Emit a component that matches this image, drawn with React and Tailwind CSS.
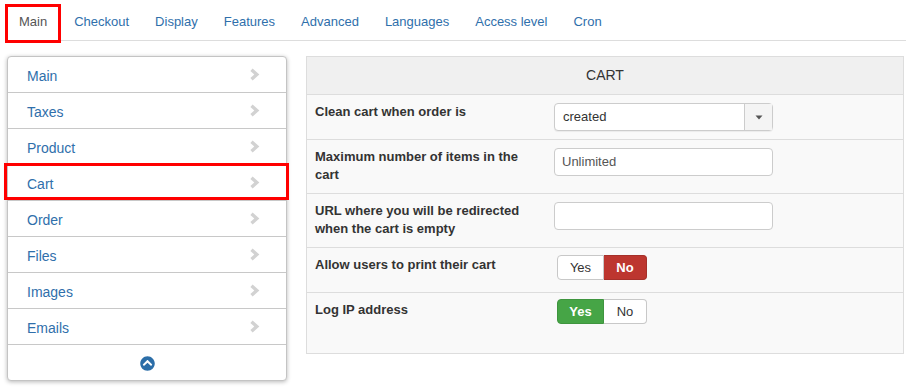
import React from "react";
import { FaChevronCircleUp } from "react-icons/fa";

const tabs = ["Checkout", "Display", "Features", "Advanced", "Languages", "Access level", "Cron"];
const items = ["Main", "Taxes", "Product", "Cart", "Order", "Files", "Images", "Emails"];

function Chevron() {
  return (
    <svg width="11" height="13" viewBox="0 0 11 13" className="mb-[4px]">
      <path d="M2.5 1.8 L7.8 6.5 L2.5 11.2" fill="none" stroke="#d2d2d2" strokeWidth="3.4" strokeLinejoin="miter" />
    </svg>
  );
}

function Toggle({ yes }) {
  return (
    <div className="ml-[3px] flex h-[25px] w-[90px] text-[13px] leading-[23px]">
      <div
        className={
          yes
            ? "w-[47px] rounded-l-[4px] border border-[#3f953f] bg-[#46a546] text-center font-bold text-white"
            : "w-[47px] rounded-l-[4px] border border-[#c8c8c8] bg-white text-center text-[#333]"
        }
      >
        Yes
      </div>
      <div
        className={
          yes
            ? "w-[43px] rounded-r-[4px] border border-l-0 border-[#c8c8c8] bg-white text-center text-[#333]"
            : "w-[43px] rounded-r-[4px] border border-l-0 border-[#a5302a] bg-[#bd362f] text-center font-bold text-white"
        }
      >
        No
      </div>
    </div>
  );
}

function Row({ label, children, h, pt, last }) {
  return (
    <div
      className={
        "grid grid-cols-[239px_1fr] bg-[#f9f9f9] " + (last ? "" : "border-b border-[#ddd]")
      }
      style={{ height: h }}
    >
      <div className="px-[8px] pt-[8px] text-[13px] font-bold leading-[18px] text-[#333]">{label}</div>
      <div className="px-[8px]" style={{ paddingTop: pt }}>
        {children}
      </div>
    </div>
  );
}

export default function App() {
  return (
    <div className="h-[390px] w-[914px] overflow-hidden bg-white pt-[4px] font-['Liberation_Sans',Arial,sans-serif] text-[13px]">
      {/* Tabs */}
      <div className="ml-[5px] flex h-[37px] w-[901px] border-b border-[#ddd]">
        <div className="relative z-10 flex h-[39px] items-center border-[3px] border-[#ff0000] bg-white px-[11px] pb-[3px] text-[13px] text-[#555]">
          Main
        </div>
        {tabs.map((t) => (
          <div key={t} className="flex h-[36px] items-center px-[13px] text-[13px] text-[#2f6fab]">
            {t}
          </div>
        ))}
      </div>

      <div className="mt-[15px] flex items-start">
        {/* Sidebar */}
        <div className="ml-[7px] w-[280px] rounded-[4px] border border-[#c4c4c4] bg-white shadow-[0_1px_4px_rgba(0,0,0,0.28)]">
          {items.map((it) => (
            <div
              key={it}
              className="relative flex h-[36px] items-center justify-between border-b border-[#c8c8c8] pl-[19px] pr-[26px] pt-[3px]"
            >
              <span className="text-[14px] text-[#2f6fab]">{it}</span>
              <Chevron />
              {it === "Cart" && (
                <div className="pointer-events-none absolute -left-[4px] -right-[3px] -top-[2px] bottom-0 border-[3px] border-[#ff0000]" />
              )}
            </div>
          ))}
          <div className="flex h-[35px] items-center justify-center pt-[2px]">
            <FaChevronCircleUp className="text-[15px] text-[#2c6ea8]" />
          </div>
        </div>

        {/* Panel */}
        <div className="ml-[19px] w-[598px] border border-[#ddd]">
          <div className="flex h-[38px] items-center justify-center border-b border-[#ddd] bg-[#f0f0f0] text-[14px] text-[#333]">
            CART
          </div>
          <Row label="Clean cart when order is" h={45} pt={8}>
            <div className="flex h-[28px] w-[219px] rounded-[4px] border border-[#ccc] bg-white shadow-[0_1px_1px_rgba(0,0,0,0.06)]">
              <div className="flex-1 pl-[8px] text-[13px] leading-[26px] text-[#333]">created</div>
              <div className="flex w-[28px] items-center justify-center border-l border-[#ccc] bg-[#f4f4f4]">
                <svg width="8" height="5" viewBox="0 0 8 5">
                  <path d="M0.5 0.5 L7.5 0.5 L4 4.5 Z" fill="#555" />
                </svg>
              </div>
            </div>
          </Row>
          <Row label="Maximum number of items in the cart" h={54} pt={8}>
            <div className="h-[28px] w-[219px] rounded-[4px] border border-[#ccc] bg-white pl-[7px] text-[13px] leading-[25px] text-[#555]">
              Unlimited
            </div>
          </Row>
          <Row label="URL where you will be redirected when the cart is empty" h={54} pt={8}>
            <div className="h-[28px] w-[219px] rounded-[4px] border border-[#ccc] bg-white" />
          </Row>
          <Row label="Allow users to print their cart" h={45} pt={7}>
            <Toggle yes={false} />
          </Row>
          <Row label="Log IP address" h={60} pt={6} last>
            <Toggle yes={true} />
          </Row>
        </div>
      </div>
    </div>
  );
}
